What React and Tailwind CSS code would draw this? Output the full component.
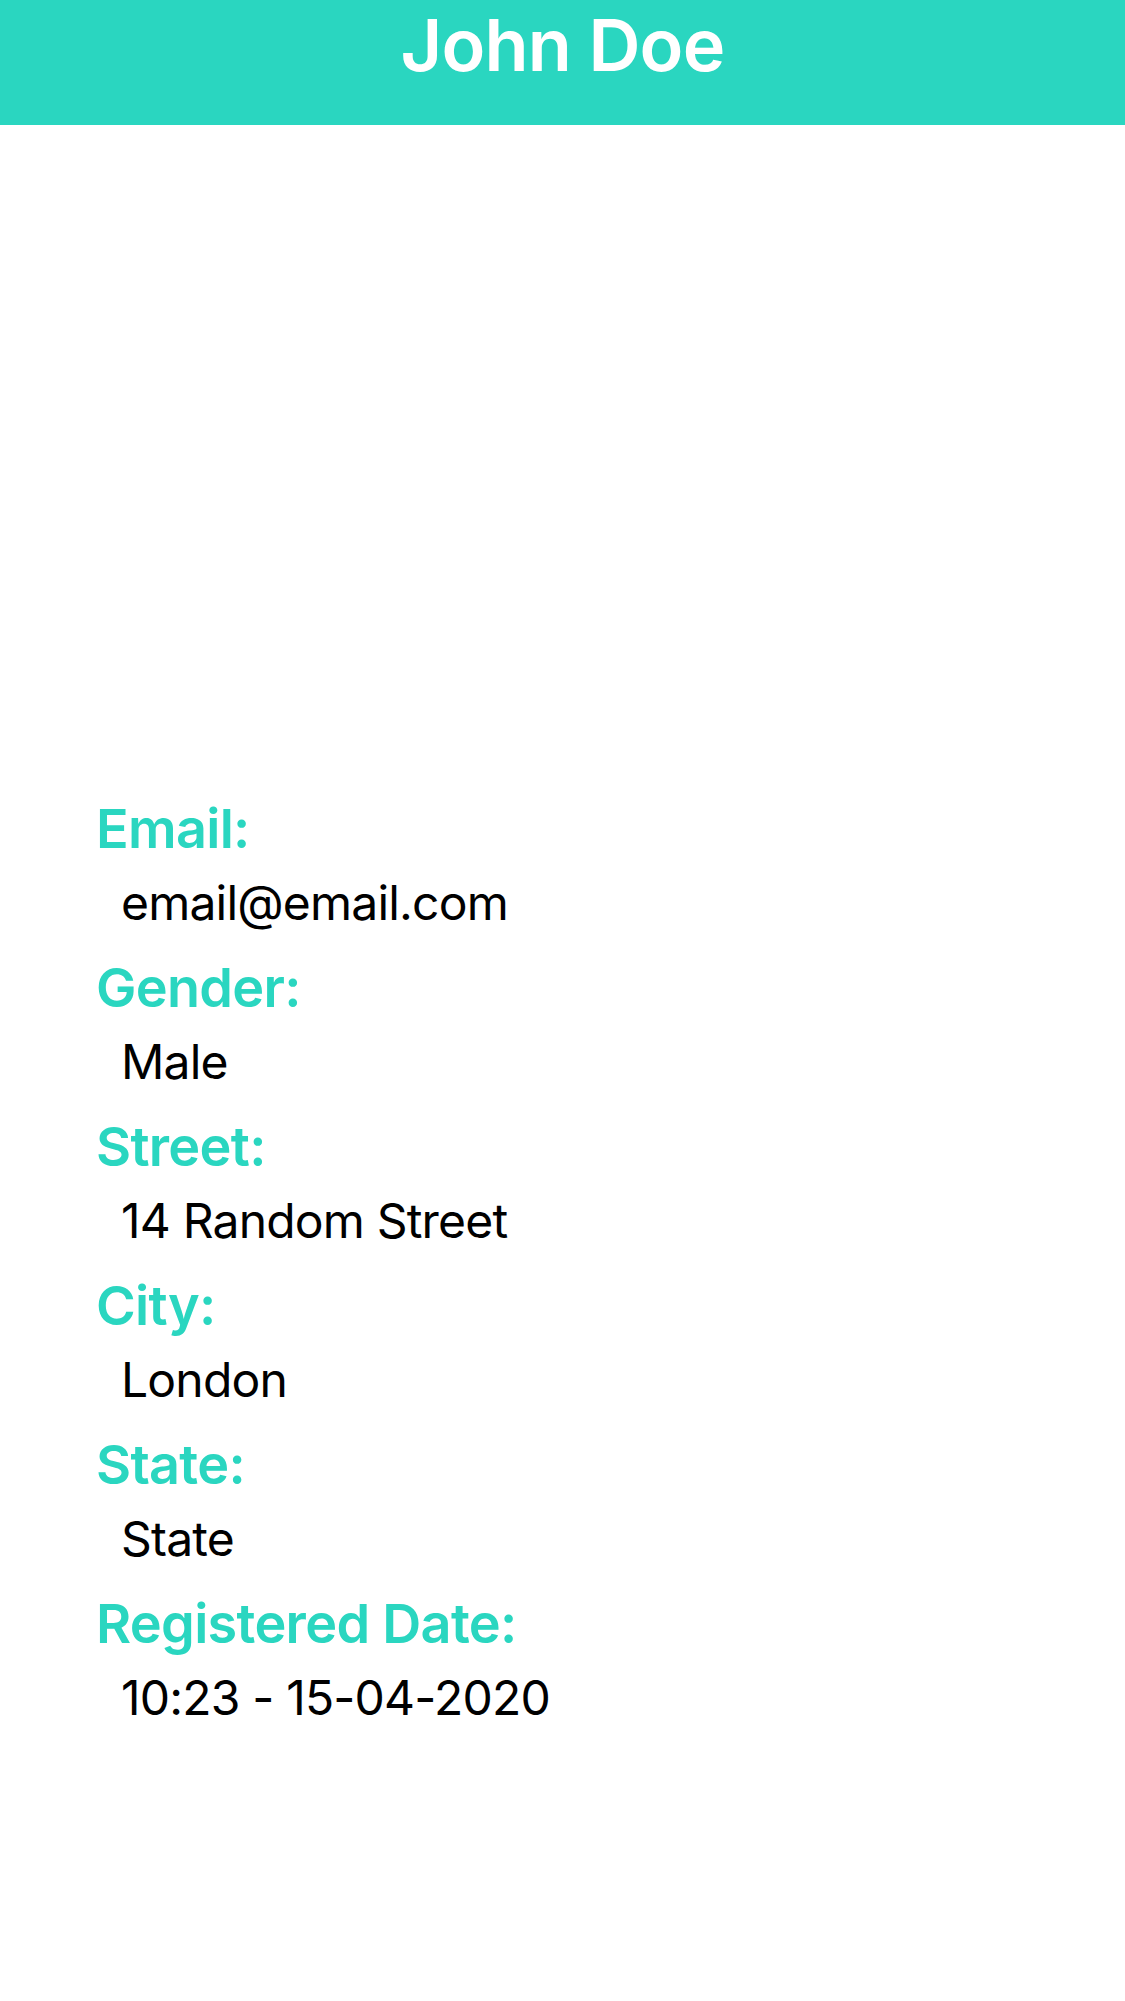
import React from 'react';

const details = [
  { label: 'Email:', value: 'email@email.com' },
  { label: 'Gender:', value: 'Male' },
  { label: 'Street:', value: '14 Random Street' },
  { label: 'City:', value: 'London' },
  { label: 'State:', value: 'State' },
  { label: 'Registered Date:', value: '10:23 - 15-04-2020' },
];

export default function App() {
  return (
    <div className="min-h-[2001px] w-full bg-white font-['Inter','Liberation_Sans',sans-serif]">
      {/* header */}
      <div className="h-[125px] bg-[#2ad6c0] pt-[9px] text-center">
        <h1 className="text-[72px] leading-[72px] font-semibold tracking-[-0.8px] text-white">John Doe</h1>
      </div>

      {/* avatar area (empty) */}
      <div className="h-[671px]" />

      <div className="flex flex-col gap-[23px] px-[96px]">
        {details.map((d) => (
          <div key={d.label} className="flex flex-col">
            <span className="text-[54px] leading-[66px] font-semibold tracking-[-0.7px] text-[#2ad6c0]">{d.label}</span>
            <span className="mt-3 pl-[25px] text-[48px] leading-[58px] tracking-[-0.8px] text-black">{d.value}</span>
          </div>
        ))}
      </div>
    </div>
  );
}
